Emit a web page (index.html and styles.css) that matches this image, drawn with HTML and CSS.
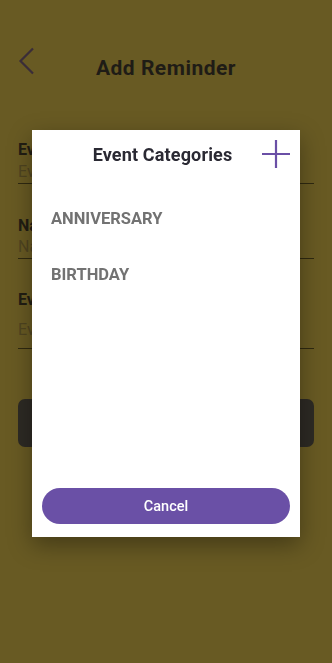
FILE: index.html
```html
<!DOCTYPE html>
<html lang="en">
<head>
<meta charset="utf-8">
<title>Add Reminder</title>
<link rel="stylesheet" href="styles.css">
</head>
<body>
<div class="page">
  <header class="header">
    <svg class="back" width="20" height="30" viewBox="0 0 20 30"><path d="M15 1.5 L2.5 14 L15 26.5" fill="none" stroke="#3a2d38" stroke-width="2.2"/></svg>
    <h1 class="title">Add Reminder</h1>
    <span class="spacer"></span>
  </header>
  <main class="form">
    <div class="field f1">
      <div class="label">Event Name</div>
      <div class="input">Event Name</div>
    </div>
    <div class="field f2">
      <div class="label">Name</div>
      <div class="input">Name</div>
    </div>
    <div class="field f3">
      <div class="label">Event Date</div>
      <div class="input tall">Event Date</div>
    </div>
    <button class="save">Save</button>
  </main>
</div>
<div class="modal">
  <div class="modal-head">
    <h2 class="modal-title">Event Categories</h2>
    <svg class="plus" width="30" height="30" viewBox="0 0 30 30"><path d="M15 1 V29 M1 15 H29" stroke="#6a4fa6" stroke-width="2.2" fill="none"/></svg>
  </div>
  <ul class="list">
    <li class="item">ANNIVERSARY</li>
    <li class="item">BIRTHDAY</li>
  </ul>
  <button class="cancel">Cancel</button>
</div>
</body>
</html>
```
FILE: styles.css
```css
* { box-sizing: border-box; }
html, body { margin: 0; padding: 0; }
body {
  width: 332px;
  height: 663px;
  background: #685a23;
  font-family: Roboto, "Noto Sans", "Liberation Sans", sans-serif;
  overflow: hidden;
}
.page { display: flex; flex-direction: column; }
.header {
  display: grid;
  grid-template-columns: 40px 1fr 40px;
  align-items: start;
  padding: 0 18px;
  height: 84px;
}
.back { margin-top: 47px; margin-left: 0; }
.title {
  margin: 56px 0 0;
  text-align: center;
  font-size: 21px;
  letter-spacing: 0.5px;
  line-height: 24px;
  font-weight: 700;
  color: #1f1c16;
}
.form { display: flex; flex-direction: column; padding: 0 18px; }
.field { display: flex; flex-direction: column; }
.f1 { margin-top: 56px; }
.f2 { margin-top: 32px; }
.f3 { margin-top: 31px; }
.label {
  font-size: 16px;
  line-height: 20px;
  font-weight: 700;
  color: #211d13;
}
.input {
  margin-top: 2px;
  font-size: 16px;
  line-height: 20px;
  color: #4f4420;
  border-bottom: 1px solid #2f2910;
  padding-bottom: 1px;
}
.f2 .input { margin-top: 1px; }
.input.tall { margin-top: 10px; padding-bottom: 8px; }
.save {
  margin-top: 50px;
  height: 48px;
  border: 0;
  border-radius: 7px;
  background: #2d2a24;
  color: #2d2a24;
  font: inherit;
}
.modal {
  position: fixed;
  left: 32px;
  top: 130px;
  width: 268px;
  height: 407px;
  background: #fff;
  box-shadow: 0 8px 22px rgba(0,0,0,0.35);
  display: flex;
  flex-direction: column;
  padding: 0 10px 13px;
}
.modal-head {
  display: flex;
  align-items: center;
  height: 48px;
  padding-left: 22px;
}
.modal-title {
  flex: 1;
  margin: 0;
  text-align: center;
  font-size: 18px;
  letter-spacing: 0.15px;
  font-weight: 700;
  color: #2a2933;
}
.plus { flex: none; margin-right: -1px; }
.list { list-style: none; margin: 13px 0 0; padding: 0; }
.item {
  height: 56px;
  line-height: 56px;
  padding-left: 9px;
  font-size: 16.5px;
  font-weight: 700;
  color: #727272;
}
.cancel {
  margin-top: auto;
  height: 36px;
  border: 0;
  border-radius: 18px;
  background: #6a50a6;
  color: #fff;
  font-family: inherit;
  font-size: 14.5px;
  font-weight: 500;
}
```
